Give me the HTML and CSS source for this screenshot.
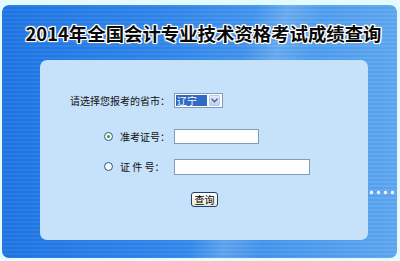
FILE: index.html
```html
<!DOCTYPE html>
<html lang="zh-CN">
<head>
<meta charset="utf-8">
<title>2014年全国会计专业技术资格考试成绩查询</title>
<link rel="stylesheet" href="styles.css">
</head>
<body>
<div class="frame">
  <h1 class="title">2014年全国会计专业技术资格考试成绩查询</h1>
  <div class="panel">
    <div class="row row-prov">
      <span class="label">请选择您报考的省市：</span>
      <div class="select">
        <span class="sel-val">辽宁</span>
        <span class="sel-btn"><svg width="7" height="5" viewBox="0 0 7 5"><path d="M0.5 0.8 L3.5 3.8 L6.5 0.8" fill="none" stroke="#4d6185" stroke-width="1.4"/></svg></span>
      </div>
    </div>
    <div class="row row-zkz">
      <span class="label"><span class="radio checked"></span><span class="ltext">准考证号：</span></span>
      <span class="input input-short"></span>
    </div>
    <div class="row row-zj">
      <span class="label"><span class="radio"></span><span class="ltext">证&nbsp;件&nbsp;号：</span></span>
      <span class="input input-long"></span>
    </div>
    <div class="btn-row"><span class="btn">查询</span></div>
  </div>
</div>
</body>
</html>
```
FILE: styles.css
```css
html, body {
  margin: 0;
  padding: 0;
}
body {
  width: 400px;
  height: 261px;
  background: #e3fbfe;
  font-family: "Noto Sans CJK SC", "Noto Sans", sans-serif;
  overflow: hidden;
}
.frame {
  position: relative;
  margin: 5px 3px 0 2px;
  height: 253px;
  border-radius: 7px;
  background:
    repeating-linear-gradient(180deg, rgba(255,255,255,0.05) 0 2px, rgba(0,0,0,0.03) 2px 4px),
    linear-gradient(105deg, rgba(255,255,255,0) 55%, rgba(255,255,255,0.18) 62%, rgba(255,255,255,0) 70%),
    linear-gradient(90deg, #1f76e6 0%, #2f86ec 40%, #4b9cf0 75%, #5fa8f2 100%);
  display: flex;
  flex-direction: column;
}
.frame::after {
  content: "";
  position: absolute;
  left: 366px;
  top: 185px;
  width: 29px;
  height: 5px;
  background: radial-gradient(circle, rgba(255,255,255,0.85) 1.5px, transparent 2.2px) 0 0 / 7px 5px repeat-x;
}
.title {
  margin: 0;
  height: 55px;
  display: flex;
  align-items: center;
  justify-content: center;
  padding-left: 8px;
  font-size: 18.4px;
  font-weight: bold;
  color: #0a0a0a;
  letter-spacing: 0;
  text-shadow:
    1px 0 0 #fff, -1px 0 0 #fff, 0 1px 0 #fff, 0 -1px 0 #fff,
    1px 1px 0 #fff, -1px -1px 0 #fff, 1px -1px 0 #fff, -1px 1px 0 #fff,
    0 0 3px #fff;
}
.panel {
  margin: 0 29px 0 38px;
  height: 180px;
  background: #c5e2fa;
  border-radius: 7px;
  display: flex;
  flex-direction: column;
  padding-top: 33px;
  box-sizing: border-box;
  font-size: 10px;
  color: #111;
}
.row {
  display: flex;
  align-items: center;
  height: 15px;
}
.row-zkz { margin-top: 21px; }
.row-zj { margin-top: 15px; }
.label {
  width: 126px;
  display: flex;
  align-items: center;
  justify-content: flex-end;
  margin-right: 8px;
  white-space: nowrap;
  line-height: 15px;
}
.row-prov .label {
  width: 130px;
  margin-right: 4px;
}
.ltext {
  width: 46px;
  text-align: left;
}
.radio {
  width: 7px;
  height: 7px;
  border: 1px solid #2c5d8f;
  border-radius: 50%;
  background: radial-gradient(circle, #fff 40%, #dfe6ee 100%);
  margin-right: 7px;
  position: relative;
}
.radio.checked::after {
  content: "";
  position: absolute;
  left: 2px;
  top: 2px;
  width: 3px;
  height: 3px;
  border-radius: 50%;
  background: #21a121;
}
.select {
  width: 45px;
  height: 13px;
  border: 1px solid #7f9db9;
  background: #fff;
  display: flex;
  align-items: center;
  padding: 0 1px;
  gap: 2px;
}
.sel-val {
  width: 31px;
  height: 11px;
  background: #316ac5;
  color: #fff;
  font-size: 10px;
  line-height: 11px;
  padding-left: 1px;
  box-sizing: border-box;
}
.sel-btn {
  width: 11px;
  height: 11px;
  background: linear-gradient(#e3ecfd, #bccff5);
  border: 1px solid #b6c9ef;
  box-sizing: border-box;
  display: flex;
  align-items: center;
  justify-content: center;
  border-radius: 1px;
}
.input {
  height: 13px;
  border: 1px solid #7f9db9;
  background: #fff;
  display: block;
}
.input-short { width: 83px; }
.input-long { width: 134px; height: 14px; }
.btn-row {
  margin-top: 18px;
  display: flex;
  justify-content: center;
}
.btn {
  width: 25px;
  height: 13px;
  border: 1px solid #1d3f6e;
  border-radius: 3px;
  background: linear-gradient(#ffffff, #ece9d8);
  font-size: 10px;
  line-height: 13px;
  text-align: center;
  color: #000;
  margin-left: 1px;
}
```
